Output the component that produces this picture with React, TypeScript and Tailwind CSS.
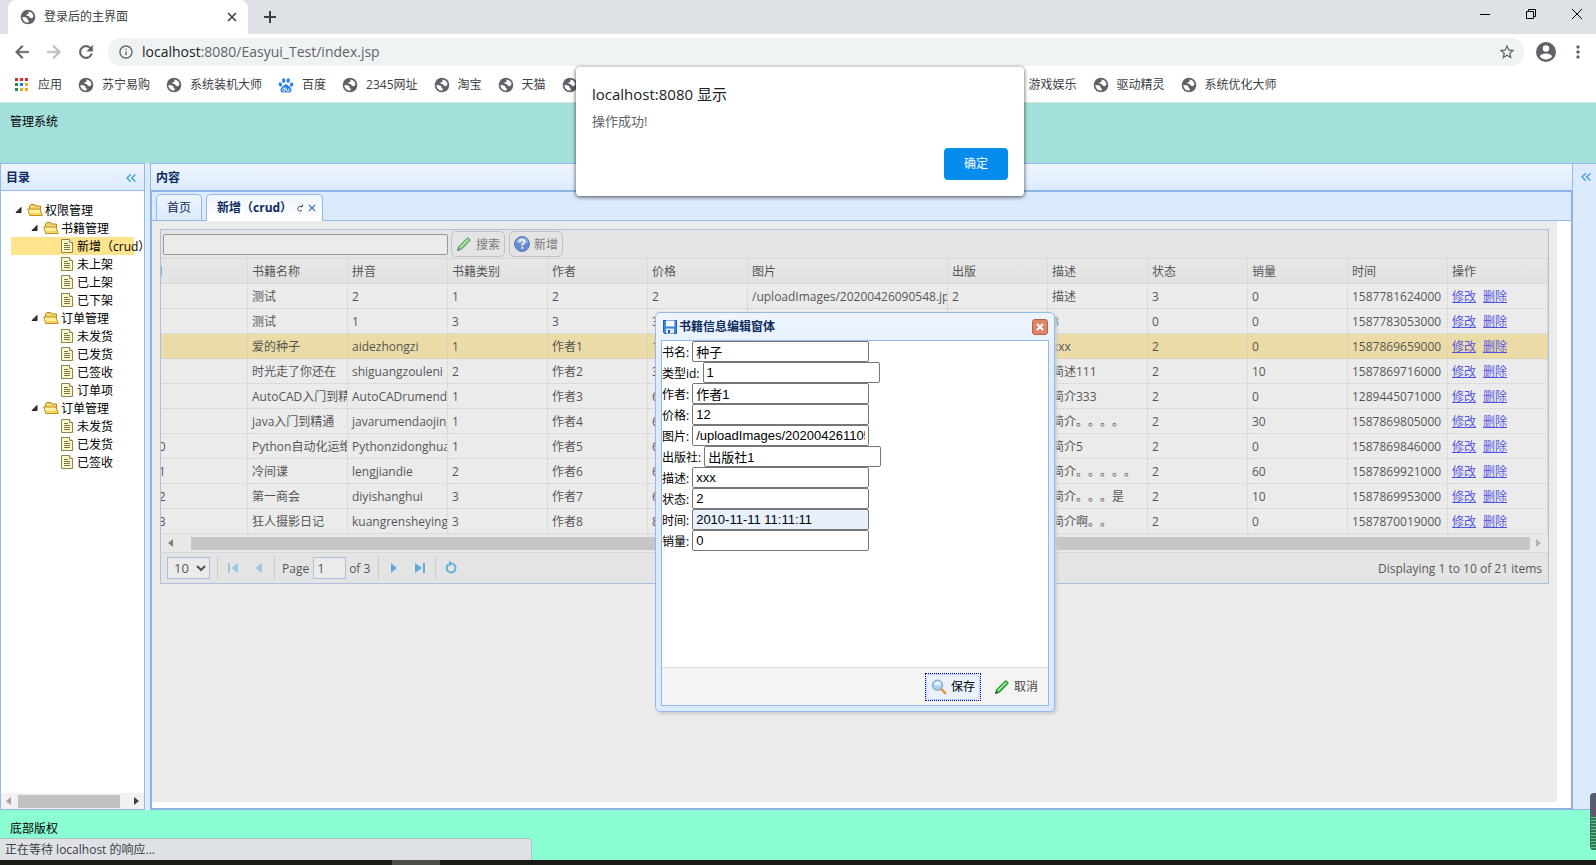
import type { ReactNode } from "react";
import { ChevronsLeft } from "lucide-react";
import {
  MdArrowBack,
  MdArrowForward,
  MdInfoOutline,
  MdMoreVert,
  MdRefresh,
  MdStarBorder,
} from "react-icons/md";

const bookmarksLeft = [
  { label: "苏宁易购", icon: "globe" },
  { label: "系统装机大师", icon: "globe" },
  { label: "百度", icon: "paw" },
  { label: "2345网址", icon: "globe" },
  { label: "淘宝", icon: "globe" },
  { label: "天猫", icon: "globe" },
];

const bookmarksRight = ["游戏娱乐", "驱动精灵", "系统优化大师"];

const tree = [
  { title: "权限管理", level: 0 },
  { title: "书籍管理", level: 1 },
  { title: "新增（crud）", level: 2, selected: true },
  { title: "未上架", level: 2 },
  { title: "已上架", level: 2 },
  { title: "已下架", level: 2 },
  { title: "订单管理", level: 1 },
  { title: "未发货", level: 2 },
  { title: "已发货", level: 2 },
  { title: "已签收", level: 2 },
  { title: "订单项", level: 2 },
  { title: "订单管理", level: 1 },
  { title: "未发货", level: 2 },
  { title: "已发货", level: 2 },
  { title: "已签收", level: 2 },
];

const indentMap = ["pl-0", "pl-4", "pl-8"];

const columns = [
  "id",
  "书籍名称",
  "拼音",
  "书籍类别",
  "作者",
  "价格",
  "图片",
  "出版",
  "描述",
  "状态",
  "销量",
  "时间",
  "操作",
];

const books = [
  ["1", "测试", "2", "1", "2", "2", "/uploadImages/20200426090548.jpg", "2", "描述", "3", "0", "1587781624000"],
  ["2", "测试", "1", "3", "3", "3", "", "3", "3", "0", "0", "1587783053000"],
  ["3", "爱的种子", "aidezhongzi", "1", "作者1", "12", "", "出版社1", "xxx", "2", "0", "1587869659000"],
  ["4", "时光走了你还在", "shiguangzouleni", "2", "作者2", "34", "", "出版社2", "简述111", "2", "10", "1587869716000"],
  ["8", "AutoCAD入门到精通", "AutoCADrumendao", "1", "作者3", "66", "", "出版社3", "简介333", "2", "0", "1289445071000"],
  ["9", "java入门到精通", "javarumendaojingtong", "1", "作者4", "66", "", "出版社4", "简介。。。。", "2", "30", "1587869805000"],
  ["10", "Python自动化运维", "Pythonzidonghua", "1", "作者5", "66", "", "出版社5", "简介5", "2", "0", "1587869846000"],
  ["11", "冷间谍", "lengjiandie", "2", "作者6", "66", "", "出版社6", "简介。。。。。", "2", "60", "1587869921000"],
  ["12", "第一商会", "diyishanghui", "3", "作者7", "66", "", "出版社7", "简介。。。是", "2", "10", "1587869953000"],
  ["13", "狂人摄影日记", "kuangrensheyingriji", "3", "作者8", "88", "", "出版社8", "简介啊。。", "2", "0", "1587870019000"],
];

const selectedBook = "3";

const fields = [
  { name: "bookName", label: "书名:", value: "种子" },
  { name: "typeId", label: "类型id:", value: "1" },
  { name: "author", label: "作者:", value: "作者1" },
  { name: "price", label: "价格:", value: "12" },
  { name: "image", label: "图片:", value: "/uploadImages/20200426110548.jpg" },
  { name: "publisher", label: "出版社:", value: "出版社1" },
  { name: "description", label: "描述:", value: "xxx" },
  { name: "state", label: "状态:", value: "2" },
  { name: "time", label: "时间:", value: "2010-11-11 11:11:11", filled: true },
  { name: "sales", label: "销量:", value: "0" },
];

function Globe() {
  return (
    <svg viewBox="0 0 16 16" className="size-4 shrink-0" aria-hidden="true">
      <circle cx="8" cy="8" r="7.3" fill="#5f6368" />
      <path
        d="M8.300 2.400C10.900 2.500 13 4.300 13.500 6.800L12.900 8.600 11.300 9.200 9.800 8.600 8.600 6.900 6.600 6.700 6.400 5.600 8.200 5.100 8.700 3.900Z"
        fill="#fff"
      />
      <path d="M2.400 7.900 5.400 8.200 7.600 9.400 7.400 10.800 8.900 11.700 8.600 13.600C5.200 13.800 2.400 11.300 2.400 7.900Z" fill="#fff" />
    </svg>
  );
}

function Paw() {
  return (
    <svg viewBox="0 0 16 16" className="size-4 shrink-0" fill="#2a7fef" aria-hidden="true">
      <ellipse cx="2.4" cy="7.4" rx="1.7" ry="2.1" transform="rotate(-15 2.4 7.4)" />
      <ellipse cx="5.7" cy="3.6" rx="1.7" ry="2.3" />
      <ellipse cx="10.2" cy="3.6" rx="1.7" ry="2.3" transform="rotate(8 10.2 3.6)" />
      <ellipse cx="13.6" cy="7.6" rx="1.7" ry="2.1" transform="rotate(12 13.6 7.6)" />
      <path d="M8 7.2c1.6 0 2.4 1.6 3.6 2.6 1.4 1.1 2 2.2 1.8 3.6-.3 1.6-1.6 2.2-3 2-1.6-.3-3.2-.3-4.8 0-1.4.2-2.7-.4-3-2-.2-1.4.4-2.5 1.8-3.6C5.6 8.8 6.4 7.2 8 7.2Z" />
      <path
        d="M7 10v4H5.7c-1.5 0-1.5-2.6 0-2.6H7M8.6 11.4V13c0 .7.4 1 1 1H11v-2.6"
        fill="none"
        stroke="#fff"
        strokeWidth=".9"
      />
    </svg>
  );
}

function AppsIcon() {
  const colors = ["#d93025", "#d93025", "#d93025", "#1e8e5a", "#1a73e8", "#f0a81c", "#1e8e5a", "#f0a81c", "#f0a81c"];
  return (
    <svg viewBox="0 0 16 16" className="size-4 shrink-0" aria-hidden="true">
      {colors.map((color, i) => (
        <rect key={i} x={2 + (i % 3) * 5} y={1 + Math.floor(i / 3) * 5} width="3" height="3" fill={color} />
      ))}
    </svg>
  );
}

function AvatarIcon() {
  return (
    <svg viewBox="0 0 24 24" className="ml-2.5 size-6" aria-hidden="true">
      <circle cx="12" cy="12" r="10" fill="currentColor" />
      <circle cx="12" cy="8.500" r="3.200" fill="#fff" />
      <path d="M12 13.500c2.400 0 6 1.200 6 3.200-1.300 1.600-3.500 2.700-6 2.700s-4.700-1.100-6-2.700c0-2 3.600-3.200 6-3.200Z" fill="#fff" />
    </svg>
  );
}

function FolderIcon() {
  return (
    <svg viewBox="0 0 16 16" className="size-4 shrink-0" aria-hidden="true">
      <path d="M2.5 13V4l1.3-1.500h4L9 4h4.500v9Z" fill="#f3d46c" stroke="#b48a1e" />
      <path d="M2.800 13.500.7 7h12l2.600 6.500Z" fill="#fdf0a0" stroke="#c08f1c" strokeLinejoin="round" />
      <path d="M3.200 12.700 2.600 11h11l.7 1.700Z" fill="#f5cf52" />
    </svg>
  );
}

function FileIcon() {
  return (
    <svg viewBox="0 0 16 16" className="size-4 shrink-0" aria-hidden="true">
      <path d="M2.500 1.500h8l3 3v10h-11Z" fill="#fbf8c4" stroke="#8a8558" />
      <path d="M10.500 1.500v3h3" fill="#fff" stroke="#8a8558" />
      <path d="M5 5.500h4M5 7.500h6M5 9.500h6M5 11.500h6" stroke="#77754e" />
    </svg>
  );
}

function PencilIcon() {
  return (
    <svg viewBox="0 0 16 16" className="size-4 shrink-0" aria-hidden="true">
      <path d="m1.500 14.500 1.200-4L11.200 2c.8-.8 3.600 1.600 2.700 2.700L5.400 13.300Z" fill="#3fc03f" stroke="#1d7d2c" />
      <path d="M4 11.500 12 3.500" stroke="#b6f0a6" strokeWidth="1.200" />
      <path d="m1.200 14.800.9-3 2 2.100Z" fill="#4a4a3a" />
    </svg>
  );
}

function HelpIcon() {
  return (
    <svg viewBox="0 0 16 16" className="size-4 shrink-0" aria-hidden="true">
      <circle cx="8" cy="8" r="7.500" fill="#1f5fd4" stroke="#1748a8" />
      <path d="M2 6.500a6.200 6.200 0 0 1 12 0C11 8 5 8 2 6.500Z" fill="#6aa0ee" />
      <path d="M5.500 6.200c0-3.200 5-3 5-.2 0 1.800-2.400 1.700-2.400 3.700" fill="none" stroke="#fff" strokeWidth="2" />
      <rect x="7.100" y="10.900" width="2.100" height="2" fill="#fff" />
    </svg>
  );
}

function SearchIcon() {
  return (
    <svg viewBox="0 0 16 16" className="size-4 shrink-0" aria-hidden="true">
      <path d="m10 10 4.300 4" stroke="#e39a3b" strokeWidth="2.600" strokeLinecap="round" />
      <circle cx="6.500" cy="6.300" r="5" fill="#a9d8f6" stroke="#9aa9b8" strokeWidth="1.400" />
      <path d="M3 6a3.500 3.500 0 0 1 7-.4C8 6.800 5 5.500 3 6Z" fill="#e4f5ff" />
    </svg>
  );
}

function SaveIcon() {
  return (
    <svg viewBox="0 0 16 16" className="size-4 shrink-0" aria-hidden="true">
      <path d="M1.500 1.500h13v13h-12l-1-1Z" fill="#3f87de" stroke="#2560b4" />
      <rect x="4" y="1.500" width="8.500" height="6" fill="#f2f8ff" />
      <rect x="4" y="9.500" width="8" height="5" fill="#dfe9f5" />
      <rect x="6" y="11" width="2" height="3" fill="#2b4f8c" />
    </svg>
  );
}

type PagerKind = "first" | "prev" | "next" | "last";

const pagerPaths: Record<PagerKind, string> = {
  first: "M3 3h2v10H3ZM13 3v10L6 8Z",
  prev: "M11 3v10L4 8Z",
  next: "M5 3v10l6-5Z",
  last: "M3 3v10l7-5ZM11 3h2v10h-2Z",
};

function PagerButton({ kind, disabled }: { kind: PagerKind; disabled?: boolean }) {
  return (
    <button type="button" aria-label={kind} disabled={disabled} className="flex size-[26px] items-center justify-center disabled:opacity-50">
      <svg viewBox="0 0 16 16" className="size-4" fill="#1495d8" aria-hidden="true">
        <path d={pagerPaths[kind]} />
      </svg>
    </button>
  );
}

function Separator() {
  return <span className="mx-0.5 h-6 w-px bg-[#ccc]" />;
}

function PanelHeader({ children }: { children: ReactNode }) {
  return (
    <div className="flex h-[26px] items-center justify-between bg-linear-to-b from-[#eff5ff] to-[#dbeafd] px-[5px] pt-0.5 font-bold text-[#0e2d5f]">
      {children}
    </div>
  );
}

function BrowserChrome() {
  return (
    <header className="shrink-0 bg-white text-[#3c4043]">
      <div className="flex h-[34px] items-start bg-[#dee1e6] pl-2">
        <div className="flex h-[34px] w-60 items-center rounded-t-lg bg-white pr-2 pl-3">
          <Globe />
          <span className="ml-2 grow">登录后的主界面</span>
          <button type="button" aria-label="关闭标签页" className="flex size-4 items-center justify-center">
            <svg viewBox="0 0 10 10" className="size-2.5" stroke="#3c4043" strokeWidth="1.600">
              <path d="m1 1 8 8M9 1 1 9" />
            </svg>
          </button>
        </div>
        <button type="button" aria-label="新标签页" className="mt-2.5 ml-[15px]">
          <svg viewBox="0 0 14 14" className="size-3.5" stroke="#3c4043" strokeWidth="2">
            <path d="M7 1v12M1 7h12" />
          </svg>
        </button>
        <div className="mt-2 mr-[13px] ml-auto flex gap-[34px]">
          <button type="button" aria-label="最小化">
            <svg viewBox="0 0 12 12" className="size-3" stroke="#000">
              <path d="M1 6.500h10" />
            </svg>
          </button>
          <button type="button" aria-label="还原">
            <svg viewBox="0 0 12 12" className="size-3" fill="none" stroke="#000">
              <path d="M1.500 3.500h7v7h-7ZM3.500 3.500v-2h7v7h-2" />
            </svg>
          </button>
          <button type="button" aria-label="关闭">
            <svg viewBox="0 0 12 12" className="size-3" stroke="#000">
              <path d="m1 1 10 10M11 1 1 11" />
            </svg>
          </button>
        </div>
      </div>
      <div className="flex h-9 items-center pr-2 pl-3 text-[#5f6368]">
        <button type="button" aria-label="后退">
          <MdArrowBack className="size-5 [&>path:last-child]:[stroke-width:0.6]" />
        </button>
        <button type="button" aria-label="前进" className="ml-3 text-[#b9bbbe]">
          <MdArrowForward className="size-5 [&>path:last-child]:[stroke-width:0.6]" />
        </button>
        <button type="button" aria-label="重新加载" className="ml-3">
          <MdRefresh className="size-5 [&>path:last-child]:[stroke-width:0.6]" />
        </button>
        <div className="ml-3 flex h-7 grow items-center rounded-full bg-[#eff3f4] pr-2 pl-2.5">
          <MdInfoOutline className="size-4" />
          <span className="ml-2 grow text-[14px]">
            <span className="text-[#202124]">localhost</span>:8080/Easyui_Test/index.jsp
          </span>
          <MdStarBorder className="size-[18px]" />
        </div>
        <AvatarIcon />
        <MdMoreVert className="ml-2.5 size-5" />
      </div>
      <nav className="flex h-[33px] items-center border-b border-[#d5e5e3] pb-[3px] pl-[13px] whitespace-nowrap">
        <a href="#apps" className="mr-4 flex items-center gap-[9px]">
          <AppsIcon />
          应用
        </a>
        {bookmarksLeft.map((item) => (
          <a key={item.label} href="#bookmark" className="mr-4 flex items-center gap-2">
            {item.icon === "paw" ? <Paw /> : <Globe />}
            {item.label}
          </a>
        ))}
        <Globe />
        <div className="ml-[427px] flex gap-4">
          {bookmarksRight.map((label) => (
            <a key={label} href="#bookmark" className="flex items-center gap-2">
              <Globe />
              {label}
            </a>
          ))}
        </div>
      </nav>
    </header>
  );
}

function Sidebar() {
  return (
    <aside className="flex w-[145px] shrink-0 flex-col border border-[#95b8e7] bg-white">
      <PanelHeader>
        目录
        <button type="button" aria-label="折叠">
          <ChevronsLeft className="size-4 text-[#3f9fd8]" strokeWidth={2} />
        </button>
      </PanelHeader>
      <ul className="grow border-t border-[#95b8e7] p-2.5 text-black">
        {tree.map((node, i) => (
          <li
            key={i}
            className={`flex h-[18px] items-center whitespace-nowrap ${indentMap[node.level]} ${
              node.selected ? "bg-[#ffe48d]" : ""
            }`}
          >
            {node.level < 2 ? (
              <svg viewBox="0 0 16 16" className="size-4 shrink-0" aria-hidden="true">
                <path d="M10 5.500v5H5Z" fill="#333" stroke="#222" strokeLinejoin="round" />
              </svg>
            ) : (
              <span className="w-4 shrink-0" />
            )}
            {node.level < 2 ? <FolderIcon /> : <FileIcon />}
            <span className="pt-0.5 pl-0.5">{node.title}</span>
          </li>
        ))}
      </ul>
      <div className="flex h-4 items-center justify-between bg-[#f1f1f1] px-[5px]">
        <svg viewBox="0 0 5 8" className="h-2 w-[5px]" fill="#a3a3a3">
          <path d="M5 0v8L0 4Z" />
        </svg>
        <span className="mr-3.5 ml-[7px] h-[13px] grow bg-[#c1c1c1]" />
        <svg viewBox="0 0 5 8" className="h-2 w-[5px]" fill="#404040">
          <path d="M0 0v8l5-4Z" />
        </svg>
      </div>
    </aside>
  );
}

function BookGrid() {
  return (
    <div className="border border-[#95b8e7] bg-white">
      <div className="flex h-[29px] items-center border-b border-[#ddd] bg-[#f4f4f4] pl-0.5">
        <input type="text" aria-label="书籍名称" className="h-[21px] w-[285px] rounded-xs border border-[#767676] bg-white px-1" />
        <button type="button" className="ml-[3px] flex h-[26px] items-center gap-1 rounded-[5px] border border-[#bbb] px-1 text-[#444]">
          <PencilIcon />
          <span className="pt-0.5">搜索</span>
        </button>
        <button type="button" className="ml-1 flex h-[26px] items-center gap-1 rounded-[5px] border border-[#bbb] px-1 text-[#444]">
          <HelpIcon />
          <span className="pt-0.5">新增</span>
        </button>
      </div>
      <div className="overflow-hidden">
        <table className="-ml-[13px] w-[1400px] table-fixed border-separate border-spacing-0 text-left whitespace-nowrap">
          <colgroup>
            {columns.map((name) => (
              <col key={name} className={name === "图片" ? "w-[200px]" : "w-[100px]"} />
            ))}
          </colgroup>
          <thead>
            <tr className="h-[25px] bg-linear-to-b from-[#f9f9f9] to-[#efefef]">
              {columns.map((name) => (
                <th
                  key={name}
                  className="overflow-hidden border-r border-b border-r-[#ccc] border-b-[#ddd] px-1 pt-0.5 pb-0 font-normal [border-right-style:dotted]"
                >
                  {name}
                </th>
              ))}
            </tr>
          </thead>
          <tbody>
            {books.map((book) => (
              <tr key={book[0]} className={`h-[25px] ${book[0] === selectedBook ? "bg-[#ffe48d]" : ""}`}>
                {book.map((value, i) => (
                  <td key={columns[i]} className="border-r border-b border-dotted border-[#ccc] px-0 pt-0.5 pb-0">
                    <div className="overflow-hidden pl-1">{value}</div>
                  </td>
                ))}
                <td className="border-r border-b border-dotted border-[#ccc] px-1 pt-0.5 pb-0">
                  <a href="#edit" className="mr-[7px] text-[#0000ee] underline">
                    修改
                  </a>
                  <a href="#remove" className="text-[#0000ee] underline">
                    删除
                  </a>
                </td>
              </tr>
            ))}
          </tbody>
        </table>
      </div>
      <div className="flex h-[18px] items-center bg-[#fafafa] px-[7px]">
        <svg viewBox="0 0 5 8" className="h-2 w-[5px]" fill="#505050">
          <path d="M5 0v8L0 4Z" />
        </svg>
        <span className="mr-1.5 ml-[18px] h-[13px] grow bg-[#c1c1c1]" />
        <svg viewBox="0 0 5 8" className="h-2 w-[5px]" fill="#a3a3a3">
          <path d="M0 0v8l5-4Z" />
        </svg>
      </div>
      <div className="flex h-[31px] items-center border-t border-[#ddd] bg-[#f4f4f4] px-1.5">
        <select aria-label="每页条数" className="mr-[5px] h-[22px] w-[43px] border border-[#95b8e7] bg-white pl-0.5 text-[13px]">
          <option>10</option>
        </select>
        <Separator />
        <PagerButton kind="first" disabled />
        <PagerButton kind="prev" disabled />
        <Separator />
        <label htmlFor="page" className="ml-[5px] pt-0.5">
          Page
        </label>
        <input id="page" type="text" defaultValue="1" className="mr-[3px] ml-1 h-[22px] w-[33px] border border-[#95b8e7] bg-white px-[3px] text-[13px]" />
        <span className="mr-1.5 pt-0.5">of 3</span>
        <Separator />
        <PagerButton kind="next" />
        <PagerButton kind="last" />
        <Separator />
        <button type="button" aria-label="刷新" className="flex size-[26px] items-center justify-center">
          <svg viewBox="0 0 16 16" className="size-4" fill="none" aria-hidden="true">
            <path d="M9.500 3.700A4.500 4.500 0 1 1 5.600 4.300" stroke="#1495d8" strokeWidth="1.800" />
            <path d="M6 .8v5.400L10 3.500Z" fill="#1495d8" />
          </svg>
        </button>
        <span className="ml-auto pt-0.5">Displaying 1 to 10 of 21 items</span>
      </div>
    </div>
  );
}

function Content() {
  return (
    <main className="flex min-w-0 grow flex-col">
      <div className="border border-b-0 border-[#95b8e7]">
        <PanelHeader>内容</PanelHeader>
      </div>
      <div className="flex grow flex-col border-2 border-[#8db3e2] bg-white">
        <div className="flex h-[29px] shrink-0 items-end gap-1 border-b border-[#95b8e7] bg-[#dbeafd] pl-1 text-[#0e2d5f]">
          <button type="button" className="h-[26px] rounded-t-[5px] border border-b-0 border-[#95b8e7] bg-linear-to-b from-[#eff5ff] to-[#dbeafd] px-2.5">
            首页
          </button>
          <div className="-mb-px flex h-[27px] items-center rounded-t-[5px] border border-b-0 border-[#95b8e7] bg-linear-to-b from-[#eff5ff] to-white pr-1.5 pl-2.5">
            <span className="font-bold">新增（crud）</span>
            <button type="button" aria-label="刷新标签" className="ml-1">
              <svg viewBox="0 0 8 8" className="size-2" fill="none" stroke="#444">
                <path d="M5.500 3A2.300 2.300 0 1 0 6 6M3.500 2.500h3V.5" />
              </svg>
            </button>
            <button type="button" aria-label="关闭标签" className="ml-1">
              <svg viewBox="0 0 8 8" className="size-2" stroke="#4a78b5" strokeWidth="1.200">
                <path d="m1 1 6 6M7 1 1 7" />
              </svg>
            </button>
          </div>
        </div>
        <div className="relative mr-3.5 mb-1.5 grow p-2 text-black">
          <BookGrid />
          <div className="absolute inset-0 bg-[#ccc]/40" />
        </div>
      </div>
    </main>
  );
}

function EditWindow() {
  return (
    <section
      role="dialog"
      aria-label="书籍信息编辑窗体"
      className="absolute top-[312px] left-[655px] flex h-[400px] w-[400px] flex-col rounded-[5px] border border-[#95b8e7] bg-linear-to-b from-[#eff5ff] to-[#dbeafd] to-20% p-[5px] shadow-[2px_2px_3px_#ccc]"
    >
      <div className="flex h-[22px] shrink-0 items-center gap-px px-px pb-1">
        <SaveIcon />
        <h2 className="grow font-bold text-[#0e2d5f]">书籍信息编辑窗体</h2>
        <button type="button" aria-label="关闭窗体" className="flex size-4 items-center justify-center rounded-[3px] border border-[#b8604a] bg-[#e08468]">
          <svg viewBox="0 0 8 8" className="size-2" stroke="#fff" strokeWidth="2">
            <path d="m1 1 6 6M7 1 1 7" />
          </svg>
        </button>
      </div>
      <div className="flex grow flex-col border border-[#95b8e7] bg-white">
        <form className="grow text-black">
          {fields.map((field) => (
            <div key={field.name} className="flex h-[21px] items-center gap-[3px]">
              <label htmlFor={field.name} className="pt-0.5">
                {field.label}
              </label>
              <input
                id={field.name}
                type="text"
                defaultValue={field.value}
                className={`h-[21px] w-[177px] rounded-xs border border-[#767676] px-[3px] font-['Liberation_Sans','Noto_Sans_CJK_SC',sans-serif] text-[13px] ${
                  field.filled ? "bg-[#e8f0fe]" : "bg-white"
                }`}
              />
            </div>
          ))}
        </form>
        <div className="flex h-[38px] items-center justify-end gap-1.5 border-t border-[#ddd] bg-[#f4f4f4] pr-[3px] text-[#444]">
          <div className="border border-dotted border-[#0000a8]">
            <button
              type="button"
              className="flex h-[26px] items-center gap-1 rounded-[5px] border border-[#b7d2ff] bg-[#eaf2ff] px-1 text-black"
            >
              <SearchIcon />
              保存
            </button>
          </div>
          <button type="button" className="flex h-[26px] items-center gap-1 px-[7px]">
            <PencilIcon />
            取消
          </button>
        </div>
      </div>
    </section>
  );
}

function Alert() {
  return (
    <section
      role="alertdialog"
      aria-label="localhost:8080 显示"
      className="absolute top-[67px] left-[576px] flex w-[448px] flex-col rounded-sm bg-white p-4 shadow-[0_1px_4px_rgba(0,0,0,0.7)]"
    >
      <h2 className="text-[15px] leading-[22px] text-[#202124]">localhost:8080 显示</h2>
      <p className="mt-1.5 text-[13px] leading-5 text-[#5f6368]">操作成功!</p>
      <button type="button" className="mt-[17px] h-8 w-16 self-end rounded-sm bg-[#058cee] text-white">
        确定
      </button>
    </section>
  );
}

export default function App() {
  return (
    <div className="relative flex min-h-screen flex-col overflow-hidden bg-white font-['Open_Sans','Noto_Sans_CJK_SC',sans-serif] text-[12px] leading-[18px] [text-spacing-trim:space-all]">
      <BrowserChrome />
      <div className="h-[60px] shrink-0 bg-[#a3e0db] px-2.5 py-2.5 text-black">管理系统</div>
      <div className="flex grow bg-[#dbeafd]">
        <Sidebar />
        <div className="w-[5px] shrink-0" />
        <Content />
        <aside className="flex w-[23px] shrink-0 items-start justify-center border-y border-[#95b8e7] pt-[5px]">
          <button type="button" aria-label="展开" className="ml-0.5">
            <ChevronsLeft className="size-4 text-[#3f9fd8]" strokeWidth={2} />
          </button>
        </aside>
      </div>
      <footer className="h-[50px] shrink-0 bg-[#8afdd2] px-2.5 py-2.5 text-black">底部版权</footer>
      <div className="h-[5px] shrink-0 bg-[#1c1a16]">
        <div className="ml-[392px] h-full w-12 bg-[#4f4d4a]" />
      </div>

      <div className="absolute bottom-[5px] left-0 flex h-[22px] w-[532px] items-center rounded-tr-sm border-t border-r border-[#a9c4ba] bg-[#dee1e6] pl-[5px] text-[#3c4043]">
        正在等待 localhost 的响应...
      </div>
      <div className="absolute right-0 bottom-[15px] flex h-[57px] w-1.5 flex-col overflow-hidden rounded-l-sm bg-[#585c6c]">
        <div className="mt-6 ml-px grow bg-[repeating-linear-gradient(#5fc98f_0_1px,#2d7a55_1px_3px)]" />
      </div>
      <EditWindow />
      <Alert />
    </div>
  );
}
